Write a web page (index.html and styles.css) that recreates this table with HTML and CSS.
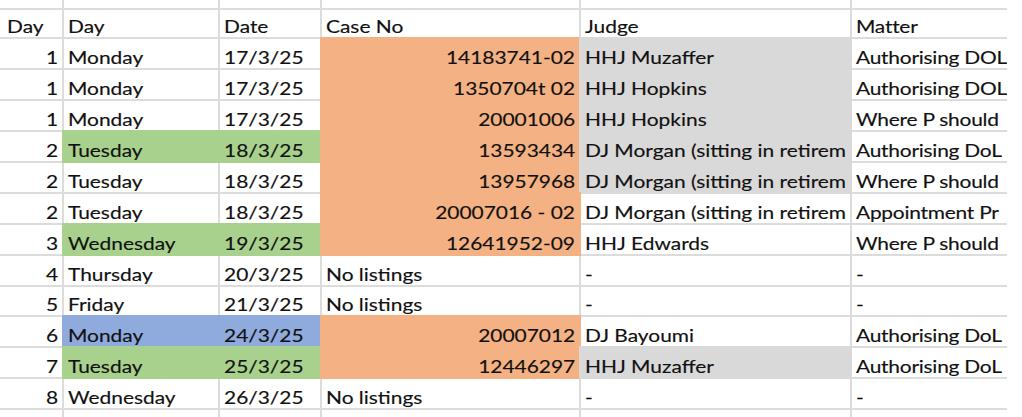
FILE: index.html
```html
<!DOCTYPE html>
<html lang="en">
<head>
<meta charset="utf-8">
<title>Listings</title>
<link rel="stylesheet" href="styles.css">
</head>
<body>
<div class="sheet">
  <div class="c"></div><div class="c"></div><div class="c"></div><div class="c"></div><div class="c"></div><div class="c m"></div>

  <div class="c first"><span class="t">Day</span></div>
  <div class="c"><span class="t">Day</span></div>
  <div class="c"><span class="t">Date</span></div>
  <div class="c"><span class="t">Case No</span></div>
  <div class="c"><span class="t">Judge</span></div>
  <div class="c m"><span class="t">Matter</span></div>

  <div class="c r"><span class="t">1</span></div>
  <div class="c"><span class="t">Monday</span></div>
  <div class="c"><span class="t">17/3/25</span></div>
  <div class="c r o"><span class="t">14183741-02</span></div>
  <div class="c g"><span class="t">HHJ Muzaffer</span></div>
  <div class="c m"><span class="t">Authorising DOL</span></div>

  <div class="c r"><span class="t">1</span></div>
  <div class="c"><span class="t">Monday</span></div>
  <div class="c"><span class="t">17/3/25</span></div>
  <div class="c r o"><span class="t">1350704t 02</span></div>
  <div class="c g"><span class="t">HHJ Hopkins</span></div>
  <div class="c m"><span class="t">Authorising DOL</span></div>

  <div class="c r"><span class="t">1</span></div>
  <div class="c"><span class="t">Monday</span></div>
  <div class="c"><span class="t">17/3/25</span></div>
  <div class="c r o"><span class="t">20001006</span></div>
  <div class="c g"><span class="t">HHJ Hopkins</span></div>
  <div class="c m"><span class="t">Where P should</span></div>

  <div class="c r"><span class="t">2</span></div>
  <div class="c gr"><span class="t">Tuesday</span></div>
  <div class="c gr"><span class="t">18/3/25</span></div>
  <div class="c r o"><span class="t">13593434</span></div>
  <div class="c g"><span class="t">DJ Morgan (sitting in retirem</span></div>
  <div class="c m"><span class="t">Authorising DoL</span></div>

  <div class="c r"><span class="t">2</span></div>
  <div class="c"><span class="t">Tuesday</span></div>
  <div class="c"><span class="t">18/3/25</span></div>
  <div class="c r o"><span class="t">13957968</span></div>
  <div class="c g"><span class="t">DJ Morgan (sitting in retirem</span></div>
  <div class="c m"><span class="t">Where P should</span></div>

  <div class="c r"><span class="t">2</span></div>
  <div class="c"><span class="t">Tuesday</span></div>
  <div class="c"><span class="t">18/3/25</span></div>
  <div class="c r o"><span class="t">20007016 - 02</span></div>
  <div class="c"><span class="t">DJ Morgan (sitting in retirem</span></div>
  <div class="c m"><span class="t">Appointment Pr</span></div>

  <div class="c r"><span class="t">3</span></div>
  <div class="c gr"><span class="t">Wednesday</span></div>
  <div class="c gr"><span class="t">19/3/25</span></div>
  <div class="c r o"><span class="t">12641952-09</span></div>
  <div class="c"><span class="t">HHJ Edwards</span></div>
  <div class="c m"><span class="t">Where P should</span></div>

  <div class="c r"><span class="t">4</span></div>
  <div class="c"><span class="t">Thursday</span></div>
  <div class="c"><span class="t">20/3/25</span></div>
  <div class="c"><span class="t">No listings</span></div>
  <div class="c"><span class="t">-</span></div>
  <div class="c m"><span class="t">-</span></div>

  <div class="c r"><span class="t">5</span></div>
  <div class="c"><span class="t">Friday</span></div>
  <div class="c"><span class="t">21/3/25</span></div>
  <div class="c"><span class="t">No listings</span></div>
  <div class="c"><span class="t">-</span></div>
  <div class="c m"><span class="t">-</span></div>

  <div class="c r"><span class="t">6</span></div>
  <div class="c b"><span class="t">Monday</span></div>
  <div class="c b"><span class="t">24/3/25</span></div>
  <div class="c r o"><span class="t">20007012</span></div>
  <div class="c"><span class="t">DJ Bayoumi</span></div>
  <div class="c m"><span class="t">Authorising DoL</span></div>

  <div class="c r"><span class="t">7</span></div>
  <div class="c gr"><span class="t">Tuesday</span></div>
  <div class="c gr"><span class="t">25/3/25</span></div>
  <div class="c r o"><span class="t">12446297</span></div>
  <div class="c g"><span class="t">HHJ Muzaffer</span></div>
  <div class="c m"><span class="t">Authorising DoL</span></div>

  <div class="c r"><span class="t">8</span></div>
  <div class="c"><span class="t">Wednesday</span></div>
  <div class="c"><span class="t">26/3/25</span></div>
  <div class="c"><span class="t">No listings</span></div>
  <div class="c"><span class="t">-</span></div>
  <div class="c m"><span class="t">-</span></div>

  <div class="c"></div><div class="c"></div><div class="c"></div><div class="c"></div><div class="c"></div><div class="c m"></div>
</div>
</body>
</html>
```
FILE: styles.css
```css
html, body {
  margin: 0;
  padding: 0;
  overflow: hidden;
  background: #ffffff;
}

.sheet {
  display: grid;
  grid-template-columns: 62px 154px 100px 257px 269px 155px;
  grid-template-rows: 7.5px 27.9px repeat(13, 28.9px);
  gap: 2px;
  width: 1007px;
  background: #dcdcdc;
  font-family: Lato, "Open Sans", sans-serif;
  font-size: 17.5px;
  line-height: 21px;
  color: #111111;
  -webkit-text-stroke: 0.15px #111111;
}

.c {
  background: #ffffff;
  display: flex;
  align-items: flex-end;
  padding: 0 4px;
  overflow: hidden;
  white-space: nowrap;
  min-width: 0;
}

.first {
  padding-left: 7px;
}

.m {
  padding-left: 3.5px;
  padding-right: 0;
}

.m .t {
  letter-spacing: -0.2px;
}

.r {
  justify-content: flex-end;
}

.t {
  display: inline-block;
  transform: scaleX(1.195);
  transform-origin: left bottom;
}

.r .t {
  transform-origin: right bottom;
}

.o {
  background: #f4b183;
  box-shadow: 0 0 0 2px #f4b183;
}

.g {
  background: #d9d9d9;
  box-shadow: 0 0 0 2px #d9d9d9;
}

.gr {
  background: #a9d18e;
  box-shadow: 0 0 0 2px #a9d18e;
}

.b {
  background: #8faadc;
  box-shadow: 0 0 0 2px #8faadc;
}
```
